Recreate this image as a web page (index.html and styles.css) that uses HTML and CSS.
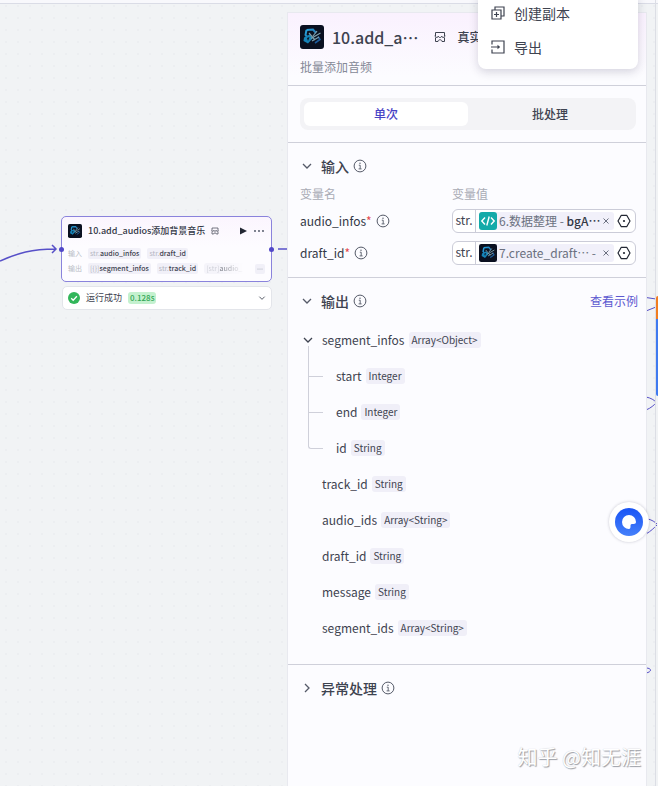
FILE: index.html
```html
<!DOCTYPE html>
<html lang="zh-CN">
<head>
<meta charset="utf-8">
<meta name="viewport" content="width=device-width, initial-scale=1">
<title>10.add_audios</title>
<link rel="stylesheet" href="styles.css">
</head>
<body>
<svg class="defs" width="0" height="0" aria-hidden="true">
  <defs>
    <linearGradient id="neon" x1="0" y1="0" x2="1" y2="1">
      <stop offset="0" stop-color="#27a6e0"/><stop offset="1" stop-color="#1d5c9c"/>
    </linearGradient>
    <symbol id="plugin" viewBox="0 0 24 24">
      <rect width="24" height="24" rx="3" fill="#0a1020"/>
      <path d="M6.500 5L13 4.500L16 8M6.500 5L5.500 10L9 14" fill="none" stroke="url(#neon)" stroke-width="2"/>
      <path d="M4 12.500L9.500 9.500L13 13L8 18.500L3.500 16Z" fill="#1583b8"/>
      <path d="M7 13L9.500 12L8 16Z" fill="#0a1020"/>
      <path d="M15 18L20 14.500L18 11.500" fill="none" stroke="#1d5c9c" stroke-width="1.600"/>
      <path d="M11 13.500L20.500 8M9 8L15 15M12 16L19 12M13 11L17 6" fill="none" stroke="#7c9fae" stroke-width="1.200"/>
    </symbol>
    <symbol id="info" viewBox="0 0 14 14">
      <circle cx="7" cy="7" r="5.900" fill="none" stroke="currentColor"/>
      <path d="M5.800 6.200H7.200V9.800M5.600 9.900H8.600" fill="none" stroke="currentColor" stroke-width=".9"/>
      <circle cx="7" cy="4.200" r=".7" fill="currentColor"/>
    </symbol>
    <symbol id="chevron" viewBox="0 0 12 12">
      <path d="M2 4L6 8L10 4" fill="none" stroke="currentColor" stroke-width="1.300"/>
    </symbol>
    <symbol id="store" viewBox="0 0 12 12">
      <path d="M1.500 5V1.500H10.500V5M1 4.500C1 7 4.300 7 4.300 5C4.300 7 7.700 7 7.700 5C7.700 7 11 7 11 4.500M1.500 6.500V10.500H4C4 8.200 8 8.200 8 10.500H10.500V6.500" fill="none" stroke="currentColor"/>
    </symbol>
    <symbol id="hex" viewBox="0 0 14 14">
      <path d="M4.300 1.300H9.700L13 7L9.700 12.700H4.300L1 7Z" fill="none" stroke="currentColor" stroke-width="1.200" stroke-linejoin="round"/>
      <circle cx="7" cy="7" r="1.100" fill="currentColor"/>
    </symbol>
    <symbol id="close" viewBox="0 0 8 8">
      <path d="M1.500 1.500L6.500 6.500M6.500 1.500L1.500 6.500" fill="none" stroke="currentColor"/>
    </symbol>
  </defs>
</svg>

<div class="topbar"></div>

<div class="canvas">
  <svg class="edges" width="658" height="786" fill="none" stroke="#5750c8" stroke-width="1.500" aria-hidden="true">
    <path d="M0 261C18 253 32 249 55 249M52 245L56 249L52 253"/>
    <path d="M278 249H288"/>
    <path stroke-width="1" d="M646 297.500L656 299M646 311L656 307M646 397C651 398 654 400 656 402M646 410C651 408 654 405 656 403M648 519C652 520 655 522 657 524M646 534C651 531 654 528 657 525M646 668C652 668 652 672 646 673"/>
  </svg>

  <article class="node">
    <header class="node-head">
      <svg class="icon14"><use href="#plugin"/></svg>
      <h2>10.add_audios添加背景音乐</h2>
      <svg class="icon8"><use href="#store"/></svg>
      <button class="node-run" aria-label="运行"><svg width="8" height="8" viewBox="0 0 8 8"><path d="M1 .5L8 4L1 7.500Z" fill="#222733"/></svg></button>
      <button aria-label="更多"><svg width="12" height="8" viewBox="0 0 12 8" fill="#444b5b"><circle cx="2" cy="4" r=".9"/><circle cx="6" cy="4" r=".9"/><circle cx="10" cy="4" r=".9"/></svg></button>
    </header>
    <div class="io"><span class="io-name">输入</span><span class="var"><i>str.</i>audio_infos</span><span class="var"><i>str.</i>draft_id</span></div>
    <div class="io"><span class="io-name">输出</span><span class="var"><i>[{}]</i>segment_infos</span><span class="var"><i>str.</i>track_id</span><span class="var fade"><i>[str]</i>audio_</span><span class="rest"><svg width="8" height="8" viewBox="0 0 8 8" fill="#a9acb8"><circle cx="2" cy="4" r=".6"/><circle cx="4" cy="4" r=".6"/><circle cx="6" cy="4" r=".6"/></svg></span></div>
    <span class="port port-in"></span><span class="port port-out"></span>
  </article>

  <div class="result">
    <svg width="12" height="12" viewBox="0 0 12 12"><circle cx="6" cy="6" r="6" fill="#32b65a"/><path d="M3.200 6.200L5.200 8.200L8.900 4.300" fill="none" stroke="#fff" stroke-width="1.300"/></svg>
    <span>运行成功</span>
    <span class="time">0.128s</span>
    <button aria-label="展开结果"><svg class="icon8"><use href="#chevron"/></svg></button>
  </div>
</div>

<main class="panel">
  <header class="panel-head">
    <div class="title-row">
      <svg class="icon24"><use href="#plugin"/></svg>
      <h1>10.add_a…</h1>
      <svg class="icon12"><use href="#store"/></svg>
      <span class="origin">真实</span>
    </div>
    <p>批量添加音频</p>
  </header>

  <div class="tabs-wrap">
    <div class="tabs" role="tablist">
      <button class="active" role="tab" aria-selected="true">单次</button>
      <button role="tab" aria-selected="false">批处理</button>
    </div>
  </div>

  <section class="inputs">
    <h3><button aria-label="收起输入"><svg class="icon12"><use href="#chevron"/></svg></button>输入<svg class="icon14"><use href="#info"/></svg></h3>
    <div class="param-head"><span>变量名</span><span>变量值</span></div>
    <div class="param">
      <span class="label">audio_infos<b>*</b><svg class="icon14"><use href="#info"/></svg></span>
      <div class="field">
        <span class="type">str.</span>
        <div class="chip">
          <svg class="icon18" viewBox="0 0 18 18"><rect width="18" height="18" rx="3" fill="#13aaa9"/><path d="M6 5.500L2.800 9L6 12.500M12 5.500L15.200 9L12 12.500M10.200 4.500L7.800 13.500" fill="none" stroke="#fff" stroke-width="1.400"/></svg>
          <span class="ref">6.数据整理 - <em>bgA…</em></span>
          <button aria-label="移除"><svg class="icon8"><use href="#close"/></svg></button>
        </div>
        <button aria-label="选择变量"><svg class="icon14"><use href="#hex"/></svg></button>
      </div>
    </div>
    <div class="param">
      <span class="label">draft_id<b>*</b><svg class="icon14"><use href="#info"/></svg></span>
      <div class="field">
        <span class="type">str.</span>
        <div class="chip">
          <svg class="icon18"><use href="#plugin"/></svg>
          <span class="ref">7.create_draft… -</span>
          <button aria-label="移除"><svg class="icon8"><use href="#close"/></svg></button>
        </div>
        <button aria-label="选择变量"><svg class="icon14"><use href="#hex"/></svg></button>
      </div>
    </div>
  </section>

  <section class="outputs">
    <h3><button aria-label="收起输出"><svg class="icon12"><use href="#chevron"/></svg></button>输出<svg class="icon14"><use href="#info"/></svg><a href="#example">查看示例</a></h3>
    <ul class="tree">
      <li>
        <div class="item"><button aria-label="收起"><svg class="icon12"><use href="#chevron"/></svg></button>segment_infos<span class="tag">Array&lt;Object&gt;</span></div>
        <ul class="children">
          <li class="item">start<span class="tag">Integer</span></li>
          <li class="item">end<span class="tag">Integer</span></li>
          <li class="item">id<span class="tag">String</span></li>
        </ul>
      </li>
      <li class="item leaf">track_id<span class="tag">String</span></li>
      <li class="item leaf">audio_ids<span class="tag">Array&lt;String&gt;</span></li>
      <li class="item leaf">draft_id<span class="tag">String</span></li>
      <li class="item leaf">message<span class="tag">String</span></li>
      <li class="item leaf">segment_ids<span class="tag">Array&lt;String&gt;</span></li>
    </ul>
  </section>

  <section class="errors">
    <h3><button class="closed" aria-label="展开异常处理"><svg class="icon12"><use href="#chevron"/></svg></button>异常处理<svg class="icon14"><use href="#info"/></svg></h3>
  </section>
</main>

<div class="side"><div class="side-thumb"></div></div>

<div class="menu" role="menu">
  <button role="menuitem"><svg width="14" height="14" viewBox="0 0 14 14" fill="none" stroke="currentColor" stroke-width="1.200"><path d="M4 3.500V1H13V10H10.500M1 4H10V13H1ZM5.500 6V11M3 8.500H8"/></svg>创建副本</button>
  <button role="menuitem"><svg width="14" height="14" viewBox="0 0 14 14" fill="none" stroke="currentColor" stroke-width="1.200"><path d="M1 4.500V1H13V13H1V9.500M0 7H8"/><path d="M6.500 4.800L9.200 7L6.500 9.200Z" fill="currentColor" stroke="none"/></svg>导出</button>
</div>

<button class="assistant" aria-label="助手">
  <svg width="28" height="28" viewBox="0 0 28 28"><defs><linearGradient id="blue" x1="0" y1="0" x2="0" y2="1"><stop stop-color="#1954f5"/><stop offset="1" stop-color="#4580fa"/></linearGradient></defs><circle cx="14" cy="14" r="14" fill="url(#blue)"/><path d="M14 7A7 7 0 0 1 21 14C21 16 19 16 17 16C15.500 16 15.500 17 15.500 18.500C15.500 20 15 21 14 21A7 7 0 0 1 14 7Z" fill="#fff"/></svg>
</button>

<div class="watermark">知乎 @知无涯</div>
</body>
</html>
```
FILE: styles.css
```css
* { box-sizing: border-box; }

body {
  margin: 0;
  min-height: 100vh;
  display: flex;
  flex-direction: column;
  position: relative;
  overflow: hidden;
  background-color: #f1f3f5;
  background-image: radial-gradient(circle, #eceef1 1px, transparent 1px);
  background-size: 12px 12px;
  color: #3e4350;
  font: 12px/20px "Noto Sans CJK SC", "Noto Sans", sans-serif;
}

h1, h2, h3, p, ul { margin: 0; padding: 0; font-weight: 400; }
ul { list-style: none; }
svg { display: block; flex: none; }
.defs { position: absolute; }

button {
  display: flex;
  align-items: center;
  padding: 0;
  border: 0;
  background: none;
  color: inherit;
  font: inherit;
}

.icon8 { width: 8px; height: 8px; }
.icon12 { width: 12px; height: 12px; }
.icon14 { width: 14px; height: 14px; }
.icon18 { width: 18px; height: 18px; }
.icon24 { width: 24px; height: 24px; }

.topbar { height: 4px; background: #f8f8fc; border-bottom: 1px solid #dadce6; }

/* Workflow canvas */
.canvas { position: absolute; inset: 0; }
.edges { position: absolute; inset: 0; }

.node {
  position: absolute;
  left: 61px;
  top: 216px;
  width: 211px;
  height: 66px;
  padding: 7px 6px 6px;
  border: 1px solid #8a83dc;
  border-radius: 5px;
  background: linear-gradient(#fbf5fe, #fdfcff 30px);
}
.node-head { display: flex; align-items: center; gap: 6px; height: 14px; margin-bottom: 8px; color: #333846; }
.node-head h2 { font-size: 9px; line-height: 14px; font-weight: 500; white-space: nowrap; }
.node-run { margin-left: auto; }

.io { display: flex; align-items: center; gap: 6px; height: 15px; font-size: 7px; line-height: 11px; white-space: nowrap; }
.io-name { width: 14px; color: #b9bcc6; }
.var { padding: 0 2px; border-radius: 2px; background: #f1f0f8; color: #3e4350; font-weight: 500; }
.var i { color: #b4b6c2; font-style: normal; font-weight: 400; }
.fade { opacity: .6; mask-image: linear-gradient(90deg, #000 40%, transparent); }
.rest { margin-left: auto; padding: 1px; border-radius: 2px; background: #f1f0f8; }

.port { position: absolute; top: 30px; width: 5px; height: 5px; border-radius: 50%; background: #5147c7; }
.port-in { left: -3px; }
.port-out { right: -3px; }

.result {
  position: absolute;
  left: 62px;
  top: 286px;
  width: 210px;
  height: 24px;
  display: flex;
  align-items: center;
  gap: 6px;
  padding: 0 5px;
  border: 1px solid #e3e5ea;
  border-radius: 5px;
  background: #fff;
  font-size: 9px;
  line-height: 12px;
}
.result button { margin-left: auto; }
.time { padding: 0 2px; border-radius: 3px; background: #c4f1cf; color: #33a756; font-size: 8px; font-weight: 500; }

/* Settings panel */
.panel {
  position: relative;
  flex: 1;
  margin: 9px 12px 0 288px;
  background: #fcfcff;
  box-shadow: 0 0 0 1px #e8e9ef;
}

.panel-head { padding: 12px 12px 8px; border-bottom: 1px solid #cfd0da; background: linear-gradient(#faf1fe, #fcfcff 64px); }
.title-row { display: flex; align-items: center; height: 24px; margin-bottom: 8px; }
.title-row h1 { margin: 0 15px 0 8px; font-size: 16px; line-height: 24px; font-weight: 500; white-space: nowrap; }
.origin { margin-left: 12px; font-weight: 500; white-space: nowrap; }
.panel-head p { color: #858997; }

.tabs-wrap { padding: 12px 10px 12px 12px; border-bottom: 1px solid #cfd0da; }
.tabs { display: flex; padding: 4px; border-radius: 8px; background: #f3f3f6; }
.tabs button { flex: 1; justify-content: center; height: 24px; border-radius: 6px; font-weight: 500; }
.tabs .active { background: #fff; color: #4742c5; }

section h3 { display: flex; align-items: center; gap: 4px; height: 24px; font-size: 14px; font-weight: 500; }
section h3 button { width: 16px; justify-content: center; margin-right: 2px; }
section h3 svg, .label svg { color: #555a68; }
section h3 a { margin-left: auto; color: #5c59d0; font-size: 12px; font-weight: 400; text-decoration: none; }
.closed svg { transform: rotate(-90deg); }

.inputs { padding: 11px 10px 12px 11px; border-bottom: 1px solid #cfd0da; }
.param-head, .param { display: grid; grid-template-columns: minmax(0, 152fr) minmax(0, 184fr); align-items: center; padding-left: 1px; }
.param-head { height: 31px; color: #a9abb5; }
.param { height: 24px; }
.param + .param { margin-top: 8px; }
.label { display: flex; align-items: center; color: #333846; }
.label b { color: #e5484d; font-weight: 400; }
.label svg { margin-left: 4px; }

.field { display: flex; align-items: center; gap: 3px; height: 24px; padding-right: 4px; border: 1px solid #cbccd8; border-radius: 6px; background: #fff; white-space: nowrap; }
.type { width: 23px; height: 22px; border-right: 1px solid #cbccd8; text-align: center; }
.chip { flex: 1; min-width: 0; display: flex; align-items: center; gap: 2px; height: 18px; padding-right: 4px; border-radius: 3px; background: #f1f0fa; color: #6b7080; }
.ref { flex: 1; min-width: 0; line-height: 18px; }
.ref em { color: #333846; font-style: normal; font-weight: 500; }
.field > button { color: #222733; }

.outputs { padding: 11px 8px 18px 11px; border-bottom: 1px solid #cfd0da; }
.tree { margin-top: 9px; padding-left: 1px; }
.item { display: flex; align-items: center; gap: 6px; height: 36px; }
.item .tag { margin-left: -2px; }
.item button { width: 16px; justify-content: center; }
.leaf { padding-left: 22px; }
.tag { padding: 0 3px; border-radius: 3px; background: #f0eff8; font-size: 10px; line-height: 16px; }
.children { position: relative; padding-left: 36px; }
.children .item { position: relative; }
.children .item::before {
  content: "";
  position: absolute;
  left: -28px;
  top: -18px;
  width: 14px;
  height: 36px;
  border: solid #cfd0da;
  border-width: 0 0 1px 1px;
}
.children .item:first-child::before { top: -12px; height: 30px; }
.children .item:last-child::before { border-bottom-left-radius: 3px; }

.errors { padding: 11px; }

/* Floating layers */
.side { position: absolute; top: 0; right: 0; bottom: 0; width: 3px; border-left: 1px solid #dcdee5; }
.side-thumb { height: 100px; margin-top: 296px; border-radius: 3px 0 0 3px; background: linear-gradient(#f17d20 23px, #3f7af0 23px); }

.menu {
  position: absolute;
  top: -8px;
  right: 20px;
  width: 160px;
  padding: 4px 0 5px;
  border-radius: 8px;
  background: #fff;
  box-shadow: 0 3px 10px rgb(40 40 70 / 18%);
  font-size: 14px;
}
.menu button { gap: 9px; width: 100%; height: 34px; padding-left: 13px; }

.assistant {
  position: absolute;
  top: 502px;
  right: 9px;
  width: 40px;
  height: 40px;
  justify-content: center;
  border-radius: 50%;
  background: #fff;
  box-shadow: 0 0 3px rgb(40 40 70 / 25%);
}

.watermark {
  position: absolute;
  right: 17px;
  bottom: 17px;
  color: #fff;
  font-size: 20px;
  line-height: 24px;
  text-shadow: 1px 1px 1px #9a9da4, 0 0 1px #c0c2c8;
  white-space: nowrap;
}
```
